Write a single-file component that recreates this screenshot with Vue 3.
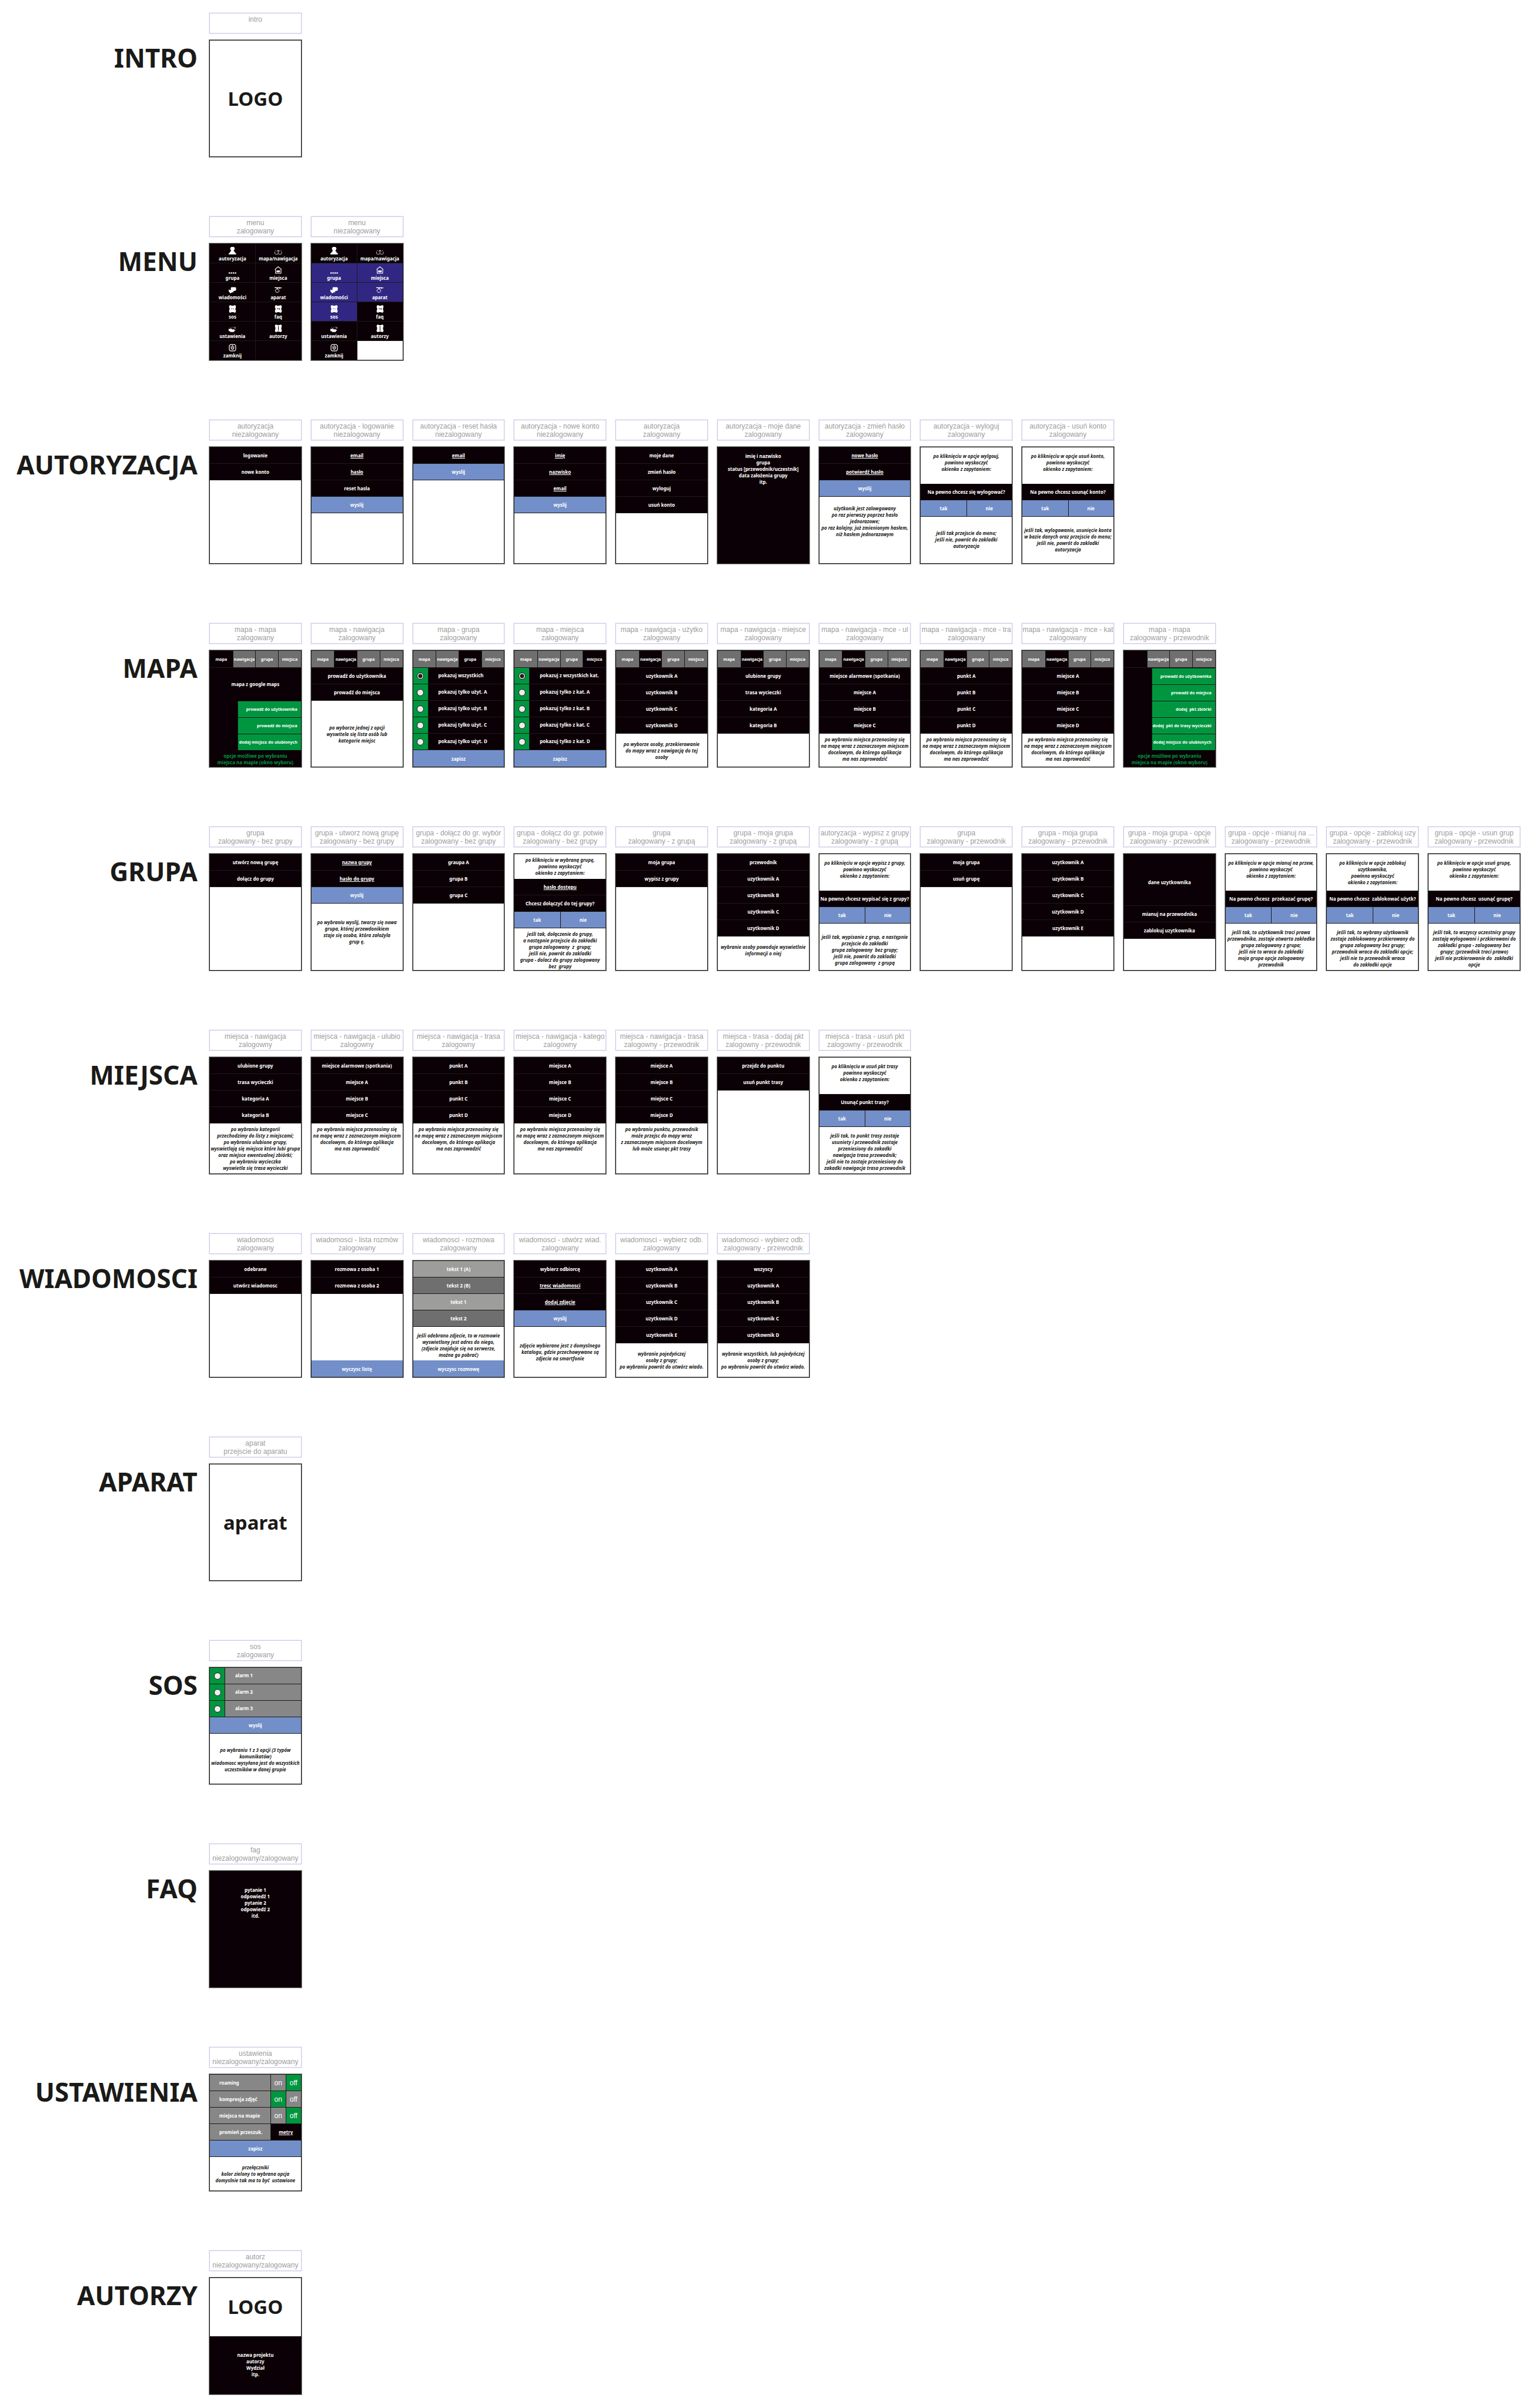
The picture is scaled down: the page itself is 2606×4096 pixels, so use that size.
<script setup>
// Block builders used to describe each screen of the application map
const r = (text) => ({ k: 'row', text })
const f = (text) => ({ k: 'field', text })
const s = (text) => ({ k: 'send', text })
const q = (text) => ({ k: 'ask', text })
const m = (text, tone) => ({ k: 'msg', text, tone })
const n = (pad, ...lines) => ({ k: 'note', pad, text: lines.join('\n') })
const top = (pad, size, ...lines) => ({ k: 'note', pad, size, text: lines.join('\n') })
const dark = (pad, ...lines) => ({ k: 'dark', pad, text: lines.join('\n') })
const tabs = (active, hideFirst = false) => ({ k: 'tabs', active, hideFirst })
const opts = (name, tone, items, checked = -1) => ({ k: 'opts', name, tone, items, checked })
const yn = { k: 'yn' }
const blank = { k: 'note', pad: 'p4', text: '' }
const rows = (...items) => items.map(r)

const tabNames = ['mapa', 'nawigacja', 'grupa', 'miejsca']

const menu = [
  { icon: 'user', text: 'autoryzacja' },
  { icon: 'map', text: 'mapa/nawigacja' },
  { icon: 'group', text: 'grupa', locked: true },
  { icon: 'home', text: 'miejsca', locked: true },
  { icon: 'chat', text: 'wiadomości', locked: true },
  { icon: 'camera', text: 'aparat', locked: true },
  { icon: 'sos', text: 'sos', locked: true },
  { icon: 'faq', text: 'faq' },
  { icon: 'tools', text: 'ustawienia' },
  { icon: 'authors', text: 'autorzy' },
  { icon: 'power', text: 'zamknij' },
]

// Solid plate with notched corners shared by several icons
const plate = 'M2.500.5h3l1 1h5l1-1h3l1.500 2v3l-1 1v5l1 1v3l-1.500 2h-3l-1-1h-5l-1 1h-3L1 15.500v-3l1-1v-5l-1-1v-3z'
const icons = {
  user: { fill: 'M6 0h6l2 2.500v3l-2 3v2h1.500l1.800 4H17.500v3H0v-3h2.200l1.800-4h1.500v-2l-1.800-3v-3z' },
  map: {
    fill: 'M1.500 8h2v1h-2zM14 8h2v1h-2zM6.500 8h5v1.300h-5z',
    line: 'M.8 11v5l1.200 1h5l1.700-1 1.700 1h5l1.200-1v-5M8.700 9v7M6 10v1.500M11.500 10v1.500',
  },
  group: { fill: 'M0 14.300h3.200v3H0zM4.800 14.300H8v3H4.800zM9.600 14.300h3.200v3H9.600zM14.400 14.300h3.200v3h-3.200z' },
  home: { fill: 'M4.500 9.700h8.300v4.500H4.500z', line: 'M.8 7.500L8.600 1l7.900 6.500M2.200 6.500v10h13v-10', w: 1.5 },
  chat: { fill: 'M6.500 3.300h9l2 1.500V10l-1.700 2h-3l-2 1.500v3l-1.500-1.200-2.300.5L5.500 17.500H3l-.5-2L0 13.500V9h1.500l1 1.500H5V5z' },
  camera: { fill: 'M0 3.700h9l2 .3 1.500-.8 1 1.200 3.500-.2v1.600h-3l-2 1.500-2-1.600H0z', line: 'M4.500 6.500h3.500v1.500M4 8.200h4.500l2 2v3l-2 2.300H4l-2-2.300v-3z', w: 1.3 },
  sos: { fill: plate + 'M6.500 7v2.500h1.200V7zM10.500 8v2.500h1.200V8z' },
  faq: { fill: plate + 'M5.500 7l1.600 3.500L8.800 7H7.800l-.7 1.500L6.500 7zM9.500 8.500L11 7h1.800v1h-1.300v1.700h1.300v1h-1.800z' },
  tools: { fill: 'M0 10h2l1 1.500 1.500-2.500H6l1 2.500 2-1v2l1.800-1.500h2v2L15.500 12v2.500h-2l-1 3H4l-1-2H0z', line: 'M10.500 5.500l1.500.8M17 5.500l-4 4M12.500 6l4 3.500M2.500 8l1.500-1.500M7 7h1.500' },
  authors: { fill: plate + 'M8.300 3.500v11h1.400v-11z' },
  power: { line: 'M4 1.500h10L16.500 4v10L14 16.500H4L1.500 14V4zM9 3v6.500M6 5.500v4.500l2 2.500h2l2-2.500V5.500', w: 1.7 },
}

const goTo = ['po wybraniu miejsca przenosimy się', 'na mapę wraz z zaznaczonym miejscem', 'docelowym, do którego aplikacja', 'ma nas zaprowadzić']
const popup = ['powinno wyskoczyć', 'okienko z zapytaniem:']

const sections = [
  { name: 'INTRO', cards: [{ t: ['intro'], b: [{ k: 'logo', text: 'LOGO' }] }] },
  {
    name: 'MENU',
    cards: [
      { t: ['menu', 'zalogowany'], b: [{ k: 'menu', lock: false }] },
      { t: ['menu', 'niezalogowany'], b: [{ k: 'menu', lock: true }] },
    ],
  },
  {
    name: 'AUTORYZACJA',
    cards: [
      { t: ['autoryzacja', 'niezalogowany'], b: rows('logowanie', 'nowe konto') },
      { t: ['autoryzacja - logowanie', 'niezalogowany'], b: [f('email'), f('hasło'), r('reset hasła'), s('wyslij'), blank] },
      { t: ['autoryzacja - reset hasła', 'niezalogowany'], b: [f('email'), s('wyslij'), blank] },
      { t: ['autoryzacja - nowe konto', 'niezalogowany'], b: [f('imię'), f('nazwisko'), f('email'), s('wyslij'), blank] },
      { t: ['autoryzacja', 'zalogowany'], b: rows('moje dane', 'zmień hasło', 'wyloguj', 'usuń konto') },
      { t: ['autoryzacja - moje dane', 'zalogowany'], b: [dark('p9', 'imię i nazwisko', 'grupa', 'status [przewodnik/uczestnik]', 'data założenia grupy', 'itp.')] },
      { t: ['autoryzacja - zmień hasło', 'zalogowany'], b: [f('nowe hasło'), f('potwierdź hasło'), s('wyslij'), n('p14', 'użytkonik jest zalowgowany', 'po raz pierwszy poprzez hasło', 'jednorazowe;', 'po raz kolejny, już zmienionym hasłem,', 'niż hasłem jednorazowym')] },
      { t: ['autoryzacja - wyloguj', 'zalogowany'], b: [top('p9', 'tall', 'po kliknięciu w opcje wylgouj,', ...popup), q('Na pewno chcesz się wylogować?'), yn, n('p22', 'jeśli tak przejscie do menu;', 'jeśli nie, powrót do zakladki', 'autoryzacja')] },
      { t: ['autoryzacja - usuń konto', 'zalogowany'], b: [top('p9', 'tall', 'po kliknięciu w opcje usuń konto,', ...popup), q('Na pewno chcesz usunąć konto?'), yn, n('p17', 'jeśli tak, wylogowanie, usunięcie konta', 'w bazie danych oraz przejscie do menu;', 'jeśli nie, powrót do zakladki', 'autoryzacja')] },
    ],
  },
  {
    name: 'MAPA',
    cards: [
      { t: ['mapa - mapa', 'zalogowany'], b: [tabs(0), { k: 'map', text: 'mapa z google maps', items: ['prowadź do użytkownika', 'prowadź do miejsca', 'dodaj miejsce do ulubionych'] }] },
      { t: ['mapa - nawigacja', 'zalogowany'], b: [tabs(1), ...rows('prowadź do użytkownika', 'prowadź do miejsca'), n('p40', 'po wyborze jednej z opcji', 'wyswitela się lista osób lub', 'kategorie miejsc')] },
      { t: ['mapa - grupa', 'zalogowany'], b: [tabs(2), opts('map-users', 'black', ['pokazuj wszystkich', 'pokazuj tylko użyt. A', 'pokazuj tylko użyt. B', 'pokazuj tylko użyt. C', 'pokazuj tylko użyt. D'], 0), s('zapisz')] },
      { t: ['mapa - miejsca', 'zalogowany'], b: [tabs(3), opts('map-places', 'black', ['pokazuj z wszystkich kat.', 'pokazuj tylko z kat. A', 'pokazuj tylko z kat. B', 'pokazuj tylko z kat. C', 'pokazuj tylko z kat. D'], 0), s('zapisz')] },
      { t: ['mapa - nawigacja - użytko', 'zalogowany'], b: [tabs(1), ...rows('uzytkownik A', 'uzytkownik B', 'uzytkownik C', 'uzytkownik D'), n('p12', 'po wyborze osoby, przekierowanie', 'do mapy wraz z nawigacją do tej', 'osoby')] },
      { t: ['mapa - nawigacja - miejsce', 'zalogowany'], b: [tabs(1), ...rows('ulubione grupy', 'trasa wycieczki', 'kategoria A', 'kategoria B')] },
      { t: ['mapa - nawigacja - mce - ul', 'zalogowany'], b: [tabs(1), ...rows('miejsce alarmowe (spotkania)', 'miejsce A', 'miejsce B', 'miejsce C'), n('p4', ...goTo)] },
      { t: ['mapa - nawigacja - mce - tra', 'zalogowany'], b: [tabs(1), ...rows('punkt A', 'punkt B', 'punkt C', 'punkt D'), n('p4', ...goTo)] },
      { t: ['mapa - nawigacja - mce - kat', 'zalogowany'], b: [tabs(1), ...rows('miejsce A', 'miejsce B', 'miejsce C', 'miejsce D'), n('p4', ...goTo)] },
      { t: ['mapa - mapa', 'zalogowany - przewodnik'], b: [tabs(0, true), { k: 'map', text: '', items: ['prowadź do użytkownika', 'prowadź do miejsca', 'dodaj  pkt zbiórki', 'dodaj  pkt do trasy wycieczki', 'dodaj miejsce do ulubionych'] }] },
    ],
  },
  {
    name: 'GRUPA',
    cards: [
      { t: ['grupa', 'zalogowany - bez grupy'], b: rows('utwórz nową grupę', 'dołącz do grupy') },
      { t: ['grupa - utworz nową grupę', 'zalogowany - bez grupy'], b: [f('nazwa grupy'), f('hasło do grupy'), s('wyslij'), n('p26', 'po wybraniu wyslij, tworzy się nowa', 'grupa, której przewdonikiem', 'staje się osoba, która założyla', 'grup ę.')] },
      { t: ['grupa - dołącz do gr. wybór', 'zalogowany - bez grupy'], b: rows('graupa A', 'grupa B', 'grupa C') },
      { t: ['grupa - dołącz do gr. potwie', 'zalogowany - bez grupy'], b: [top('p4', 'short', 'po kliknięciu w wybraną grupę,', ...popup), f('hasło dostępu'), q('Chcesz dołączyć do tej grupy?'), yn, n('p4', 'jeśli tak, dołączenie do grupy,', 'a następnie przejscie do zakładki', 'grupa zalogowany  z  grupą;', 'jeśli nie, powrót do zakladki', 'grupa - dolacz do grupy zalogowany', 'bez  grupy')] },
      { t: ['grupa', 'zalogowany - z grupą'], b: rows('moja grupa', 'wypisz z grupy') },
      { t: ['grupa - moja grupa', 'zalogowany - z grupą'], b: [...rows('przewodnik', 'uzytkownik A', 'uzytkownik B', 'uzytkownik C', 'uzytkownik D'), n('p12', 'wybranie osoby powoduje wyswietlnie', 'informacji o niej')] },
      { t: ['autoryzacja - wypisz z grupy', 'zalogowany - z grupą'], b: [top('p9', 'tall', 'po kliknięciu w opcje wypisz z grupy,', ...popup), q('Na pewno chcesz wypisać się z grupy?'), yn, n('p17', 'jeśli tak, wypisanie z grup, a następnie', 'przejscie do zakładki', 'grupa zalogowany  bez grupy;', 'jeśli nie, powrót do zakladki', 'grupa zalogowany  z grupą')] },
      { t: ['grupa', 'zalogowany - przewodnik'], b: rows('moja grupa', 'usuń grupę') },
      { t: ['grupa - moja grupa', 'zalogowany - przewodnik'], b: rows('uzytkownik A', 'uzytkownik B', 'uzytkownik C', 'uzytkownik D', 'uzytkownik E') },
      { t: ['grupa - moja grupa - opcje', 'zalogowany - przewodnik'], b: [{ k: 'info', text: 'dane uzytkownika' }, ...rows('mianuj na przewodnika', 'zablokuj uzytkownika')] },
      { t: ['grupa - opcje - mianuj na ...', 'zalogowany - przewodnik'], b: [top('p9', 'tall', 'po kliknięciu w opcje mianuj na przew,', ...popup), q('Na pewno chcesz  przekazać grupę?'), yn, n('p9', 'jeśli tak, to użytkownik traci prawa', 'przewodnika, zostaje otwarta zakładka', 'grupa zalogowany z grupa;', 'jeśli nie to wraca do zakładki', 'moja grupa opcje zalogowany', 'przewodnik')] },
      { t: ['grupa - opcje - zablokuj uzy', 'zalogowany - przewodnik'], b: [top('p9', 'tall', 'po kliknięciu w opcje zablokuj', 'uzytkownika,', ...popup), q('Na pewno chcesz  zablokować użytk?'), yn, n('p9', 'jeśli tak, to wybrany użytkownik', 'zostaje zablokowany przkierowany do', 'grupa zalogowany bez grupy;', 'przewodnik wraca do zakladki opcje;', 'jeśli nie to przewodnik wraca', 'do zakładki opcje')] },
      { t: ['grupa - opcje - usun grup', 'zalogowany - przewodnik'], b: [top('p9', 'tall', 'po kliknięciu w opcje usuń grupę,', ...popup), q('Na pewno chcesz  usunąć grupę?'), yn, n('p9', 'jeśli tak, to wszyscy uczestnicy grupy', 'zostają wylogowani i przkierowani do', 'zakładki grupa - zalogowany bez', 'grupy; (przewdnik traci prawo)', 'jeśli nie przkierowanie do  zakładki', 'opcje')] },
    ],
  },
  {
    name: 'MIEJSCA',
    cards: [
      { t: ['miejsca - nawigacja', 'zalogowny'], b: [...rows('ulubione grupy', 'trasa wycieczki', 'kategoria A', 'kategoria B'), n('p4', 'po wybraniu kategorii', 'przechodzimy do listy z miejscami;', 'po wybraniu ulubione grupy,', 'wyswietlają się miejsca które lubi grupa', 'oraz miejsce ewentualnej zbiórki;', 'po wybraniu wycieczka', 'wyswietla się trasa wycieczki')] },
      { t: ['miejsca - nawigacja - ulubio', 'zalogowny'], b: [...rows('miejsce alarmowe (spotkania)', 'miejsce A', 'miejsce B', 'miejsce C'), n('p4', ...goTo)] },
      { t: ['miejsca - nawigacja - trasa', 'zalogowny'], b: [...rows('punkt A', 'punkt B', 'punkt C', 'punkt D'), n('p4', ...goTo)] },
      { t: ['miejsca - nawigacja - katego', 'zalogowny'], b: [...rows('miejsce A', 'miejsce B', 'miejsce C', 'miejsce D'), n('p4', ...goTo)] },
      { t: ['miejsca - nawigacja - trasa', 'zalogowny - przewodnik'], b: [...rows('miejsce A', 'miejsce B', 'miejsce C', 'miejsce D'), n('p4', 'po wybraniu punktu, przewodnik', 'może przejsc do mapy wraz', 'z zaznaczonym miejscem docelowym', 'lub może usunąc pkt trasy')] },
      { t: ['miejsca - trasa - dodaj pkt', 'zalogowny - przewodnik'], b: rows('przejdz do punktu', 'usuń punkt trasy') },
      { t: ['miejsca - trasa - usuń pkt', 'zalogowny - przewodnik'], b: [top('p9', 'tall', 'po kliknięciu w usuń pkt trasy', ...popup), q('Usunąć punkt trasy?'), yn, n('p9', 'jeśli tak, to punkt trasy zostaje', 'usuniety i przewodnik zostaje', 'przeniesiony do zakadki', 'nawigacja trasa przewodnik;', 'jeśli nie to zostaje przeniesiony do', 'zakadki nawigacja trasa przewodnik')] },
    ],
  },
  {
    name: 'WIADOMOSCI',
    cards: [
      { t: ['wiadomosci', 'zalogowany'], b: rows('odebrane', 'utwórz wiadomosc') },
      { t: ['wiadomosci - lista rozmów', 'zalogowany'], b: [...rows('rozmowa z osoba 1', 'rozmowa z osoba 2'), blank, s('wyczysc listę')] },
      { t: ['wiadomosci - rozmowa', 'zalogowany'], b: [m('tekst 1 (A)', 'light'), m('tekst 2 (B)', 'deep'), m('tekst 1', 'light'), m('tekst 2', 'deep'), n('p9', 'jeśli odebrano zdjecie, to w rozmowie', 'wyswietlony jest adres do niego,', '(zdjecie znajduje się na serwerze,', 'można go pobrać)'), s('wyczysc rozmowę')] },
      { t: ['wiadomosci - utwórz wiad.', 'zalogowany'], b: [r('wybierz odbiorcę'), f('tresc wiadomosci'), f('dodaj zdjęcie'), s('wyslij'), n('p26', 'zdjęcie wybierane jest z domyslnego', 'katalogu, gdzie przechowywane są', 'zdjecia na smartfonie')] },
      { t: ['wiadomosci - wybierz odb.', 'zalogowany'], b: [...rows('uzytkownik A', 'uzytkownik B', 'uzytkownik C', 'uzytkownik D', 'uzytkownik E'), n('p12', 'wybranie pojedyńczej', 'osoby z grupy;', 'po wybraniu powrót do utwórz wiado.')] },
      { t: ['wiadomosci - wybierz odb.', 'zalogowany - przewodnik'], b: [...rows('wszyscy', 'uzytkownik A', 'uzytkownik B', 'uzytkownik C', 'uzytkownik D'), n('p12', 'wybranie wszystkich, lub pojedyńczej', 'osoby z grupy;', 'po wybraniu powrót do utwórz wiado.')] },
    ],
  },
  { name: 'APARAT', cards: [{ t: ['aparat', 'przejscie do aparatu'], b: [{ k: 'logo', text: 'aparat' }] }] },
  {
    name: 'SOS',
    cards: [{ t: ['sos', 'zalogowany'], b: [opts('alarm', 'gray', ['alarm 1', 'alarm 2', 'alarm 3']), s('wyslij'), n('p22', 'po wybraniu 1 z 3 opcji (3 typów', 'komunikatów)', 'wiadomosc wysyłana jest do wszystkich', 'uczestników w danej grupie')] }],
  },
  { name: 'FAQ', cards: [{ t: ['fag', 'niezalogowany/zalogowany'], b: [dark('p26', 'pytanie 1', 'odpowiedź 1', 'pytanie 2', 'odpowiedź 2', 'itd.')] }] },
  {
    name: 'USTAWIENIA',
    cards: [{
      t: ['ustawienia', 'niezalogowany/zalogowany'],
      b: [
        { k: 'switch', text: 'roaming', on: false },
        { k: 'switch', text: 'kompresja zdjęć', on: true },
        { k: 'switch', text: 'miejsca na mapie', on: false },
        { k: 'radius', text: 'promień przeszuk.', value: 'metry' },
        s('zapisz'),
        n('p12', 'przełączniki', 'kolor zielony to wybrana opcja', 'domyslnie tak ma to być  ustawione'),
      ],
    }],
  },
  { name: 'AUTORZY', cards: [{ t: ['autorz', 'niezalogowany/zalogowany'], b: [{ k: 'logo', text: 'LOGO' }, dark('p26', 'nazwa projektu', 'autorzy', 'Wydział', 'itp.')] }] },
]
</script>

<template>
  <main class="board">
    <section v-for="sec in sections" :key="sec.name" class="section">
      <h2 class="section-name">{{ sec.name }}</h2>
      <div class="cards">
        <article v-for="(card, ci) in sec.cards" :key="ci" class="card">
          <header class="caption">
            <div v-for="line in card.t" :key="line">{{ line }}</div>
          </header>
          <div class="screen">
            <template v-for="(b, bi) in card.b" :key="bi">
              <button v-if="b.k === 'row'" type="button" class="row">{{ b.text }}</button>
              <input v-else-if="b.k === 'field'" type="text" class="row field" :value="b.text" :aria-label="b.text" />
              <button v-else-if="b.k === 'send'" type="button" class="row send">{{ b.text }}</button>
              <div v-else-if="b.k === 'ask'" class="row ask">{{ b.text }}</div>
              <div v-else-if="b.k === 'msg'" class="row ask" :class="b.tone">{{ b.text }}</div>
              <div v-else-if="b.k === 'info'" class="info">{{ b.text }}</div>
              <div v-else-if="b.k === 'yn'" class="pair">
                <button type="button" class="row send">tak</button>
                <button type="button" class="row send">nie</button>
              </div>
              <p v-else-if="b.k === 'note'" class="note" :class="[b.pad, b.size]">{{ b.text }}</p>
              <p v-else-if="b.k === 'dark'" class="note inverse" :class="b.pad">{{ b.text }}</p>
              <div v-else-if="b.k === 'logo'" class="logo">{{ b.text }}</div>
              <nav v-else-if="b.k === 'tabs'" class="tabs">
                <button
                  v-for="(name, ti) in tabNames"
                  :key="name"
                  type="button"
                  class="tab"
                  :class="{ active: ti === b.active }"
                  :aria-label="name"
                >{{ b.hideFirst && ti === 0 ? '' : name }}</button>
              </nav>
              <div v-else-if="b.k === 'map'" class="map">
                <div v-if="b.text" class="map-area">{{ b.text }}</div>
                <div class="map-actions">
                  <button v-for="item in b.items" :key="item" type="button" class="map-action">{{ item }}</button>
                </div>
                <p class="map-hint">opcje możliwe po wybraniu<br />miejsca na mapie (okno wyboru)</p>
              </div>
              <template v-else-if="b.k === 'opts'">
                <label v-for="(item, oi) in b.items" :key="item" class="option" :class="b.tone">
                  <span class="option-mark">
                    <input type="radio" class="radio" :name="b.name" :checked="oi === b.checked" />
                  </span>
                  <span class="option-text">{{ item }}</span>
                </label>
              </template>
              <div v-else-if="b.k === 'switch'" class="setting">
                <span class="setting-name">{{ b.text }}</span>
                <button type="button" class="toggle" :class="{ chosen: b.on }">on</button>
                <button type="button" class="toggle" :class="{ chosen: !b.on }">off</button>
              </div>
              <label v-else-if="b.k === 'radius'" class="setting">
                <span class="setting-name">{{ b.text }}</span>
                <input type="text" class="row field radius" :value="b.value" />
              </label>
              <div v-else-if="b.k === 'menu'" class="menu">
                <button
                  v-for="item in menu"
                  :key="item.text"
                  type="button"
                  class="menu-item"
                  :class="{ locked: b.lock && item.locked }"
                >
                  <svg class="icon" viewBox="0 0 18 18" aria-hidden="true">
                    <path v-if="icons[item.icon].fill" :d="icons[item.icon].fill" fill="currentColor" fill-rule="evenodd" />
                    <path
                      v-if="icons[item.icon].line"
                      :d="icons[item.icon].line"
                      fill="none"
                      stroke="currentColor"
                      :stroke-width="icons[item.icon].w || 1"
                    />
                  </svg>
                  <span>{{ item.text }}</span>
                </button>
                <div class="menu-end" :class="{ empty: b.lock }"></div>
              </div>
            </template>
          </div>
        </article>
      </div>
    </section>
  </main>
</template>

<style>
body {
  margin: 0;
  background: #fff;
}
</style>

<style scoped>
.board {
  --ink: #1a1a18;
  --black: #0b0005;
  --blue: #738fc9;
  --green: #009640;
  --gray: #878787;
  display: flex;
  flex-direction: column;
  gap: 101px;
  padding: 22px 20px 22px 0;
  font-family: "Noto Sans", "Open Sans", sans-serif;
  font-size: 8px;
  font-weight: 700;
  line-height: 11px;
  color: var(--ink);
}
.section {
  display: grid;
  grid-template-columns: 336px minmax(0, 1fr);
  column-gap: 20px;
}
.section-name {
  margin: 53px 0 0;
  font-size: 44px;
  line-height: 46px;
  text-align: right;
}
.cards {
  display: grid;
  grid-template-columns: repeat(13, minmax(0, 1fr));
  column-gap: 16px;
}
.card {
  display: flex;
  flex-direction: column;
  gap: 11px;
}
.caption {
  box-sizing: border-box;
  min-height: 35px;
  padding: 3px 0 2px;
  border: 1px solid #cfcbe8;
  box-shadow: 0 0 0 1px rgba(207, 203, 232, 0.4);
  overflow: hidden;
  font: 400 12px/14px "Liberation Sans", Arial, sans-serif;
  color: #9d9d9c;
  text-align: center;
  white-space: nowrap;
}
.screen {
  box-sizing: border-box;
  display: flex;
  flex-direction: column;
  min-height: 199px;
  border: 1px solid var(--ink);
  box-shadow: 0 0 0 1px rgba(26, 26, 24, 0.5);
  overflow: hidden;
}
button,
input {
  box-sizing: border-box;
  margin: 0;
  padding: 0;
  border: 0;
  border-radius: 0;
  font: inherit;
  color: #fff;
}
.row {
  box-sizing: border-box;
  display: block;
  flex: 0 0 28px;
  width: 100%;
  min-width: 0;
  height: 28px;
  border-bottom: 1px solid var(--ink);
  background: var(--black);
  color: #fff;
  text-align: center;
  white-space: pre;
}
.field {
  text-decoration: underline;
}
.send {
  background: var(--blue);
}
.send:last-child {
  border-bottom: 0;
}
.ask {
  padding-top: 8px;
}
.light {
  background: #9d9d9c;
}
.deep {
  background: #706f6f;
}
.info {
  display: flex;
  align-items: center;
  justify-content: center;
  height: 79px;
  padding-top: 8px;
  border-bottom: 1px solid var(--ink);
  background: var(--black);
  color: #fff;
}
.pair {
  display: grid;
  grid-template-columns: 1fr 1fr;
}
.pair .row + .row {
  border-left: 1px solid var(--ink);
}
.pair .row {
  border-bottom: 1px solid var(--ink);
}
.note {
  box-sizing: border-box;
  flex: 1 0 auto;
  margin: 0;
  font-style: italic;
  text-align: center;
  white-space: pre;
}
.inverse {
  flex: 1 1 98px;
  background: var(--black);
  color: #fff;
  font-style: normal;
}
.tall {
  flex: 0 0 62px;
}
.short {
  flex: 0 0 42px;
}
.p4 { padding-top: 4px; }
.p9 { padding-top: 9px; }
.p12 { padding-top: 12px; }
.p14 { padding-top: 14px; }
.p17 { padding-top: 17px; }
.p22 { padding-top: 22px; }
.p26 { padding-top: 26px; }
.p40 { padding-top: 40px; }
.logo {
  display: flex;
  flex: 1 1 98px;
  align-items: center;
  justify-content: center;
  font-size: 33px;
  line-height: 40px;
}
.tabs {
  display: grid;
  grid-template-columns: repeat(4, 1fr);
  flex: 0 0 29px;
}
.tab {
  border-bottom: 1px solid var(--ink);
  background: #706f6f;
  font-size: 7px;
}
.tab + .tab {
  border-left: 1px solid var(--ink);
}
.active {
  background: var(--black);
}
.map {
  display: flex;
  flex: 1;
  flex-direction: column;
  background: var(--black);
  color: #fff;
  text-align: center;
}
.map-area {
  flex: 0 0 56px;
  line-height: 56px;
}
.map-actions {
  display: flex;
  flex-direction: column;
  margin-left: 47px;
  border-left: 1px solid var(--ink);
}
.map-action {
  flex: 0 0 28px;
  height: 28px;
  padding-right: 6px;
  border-top: 1px solid var(--ink);
  background: var(--green);
  font-size: 7px;
  text-align: right;
  white-space: pre;
}
.map-hint {
  margin: 4px 0 0;
  color: var(--green);
}
.option {
  display: flex;
  flex: 0 0 28px;
  color: #fff;
}
.option-mark {
  display: flex;
  align-items: center;
  justify-content: center;
  width: 25px;
  border-right: 1px solid var(--ink);
  border-bottom: 1px solid var(--ink);
  background: var(--green);
}
.radio {
  width: 12px;
  height: 12px;
  border: 1px solid var(--ink);
  border-radius: 50%;
  background: #ededed;
  appearance: none;
}
.radio:checked {
  background: radial-gradient(circle, var(--ink) 0 3px, #ededed 4px);
}
.option-text {
  flex: 1;
  padding-left: 17px;
  border-bottom: 1px solid var(--ink);
  line-height: 26px;
}
.black .option-text {
  background: var(--black);
}
.gray .option-text {
  background: var(--gray);
}
.setting {
  display: grid;
  grid-template-columns: minmax(0, 1fr) 26px 26px;
  flex: 0 0 28px;
  color: #fff;
}
.setting-name {
  padding-left: 16px;
  border-bottom: 1px solid var(--ink);
  background: var(--gray);
  line-height: 27px;
}
.toggle {
  border-left: 1px solid var(--ink);
  border-bottom: 1px solid var(--ink);
  background: var(--gray);
  font: 400 12px/14px "Liberation Sans", Arial, sans-serif;
}
.chosen {
  background: var(--green);
}
.radius {
  grid-column: span 2;
  border-bottom: 1px solid var(--ink);
  border-left: 1px solid var(--ink);
}
.menu {
  display: grid;
  flex: 1;
  grid-template-columns: 1fr 1fr;
  grid-auto-rows: 1fr;
  gap: 1px;
  background: var(--ink);
}
.menu-item {
  display: flex;
  flex-direction: column;
  align-items: center;
  gap: 1px;
  padding-top: 5px;
  background: var(--black);
}
.locked {
  background: #312783;
}
.icon {
  width: 13px;
  height: 13px;
}
.menu-end {
  background: var(--black);
}
.empty {
  background: #fff;
}
</style>
